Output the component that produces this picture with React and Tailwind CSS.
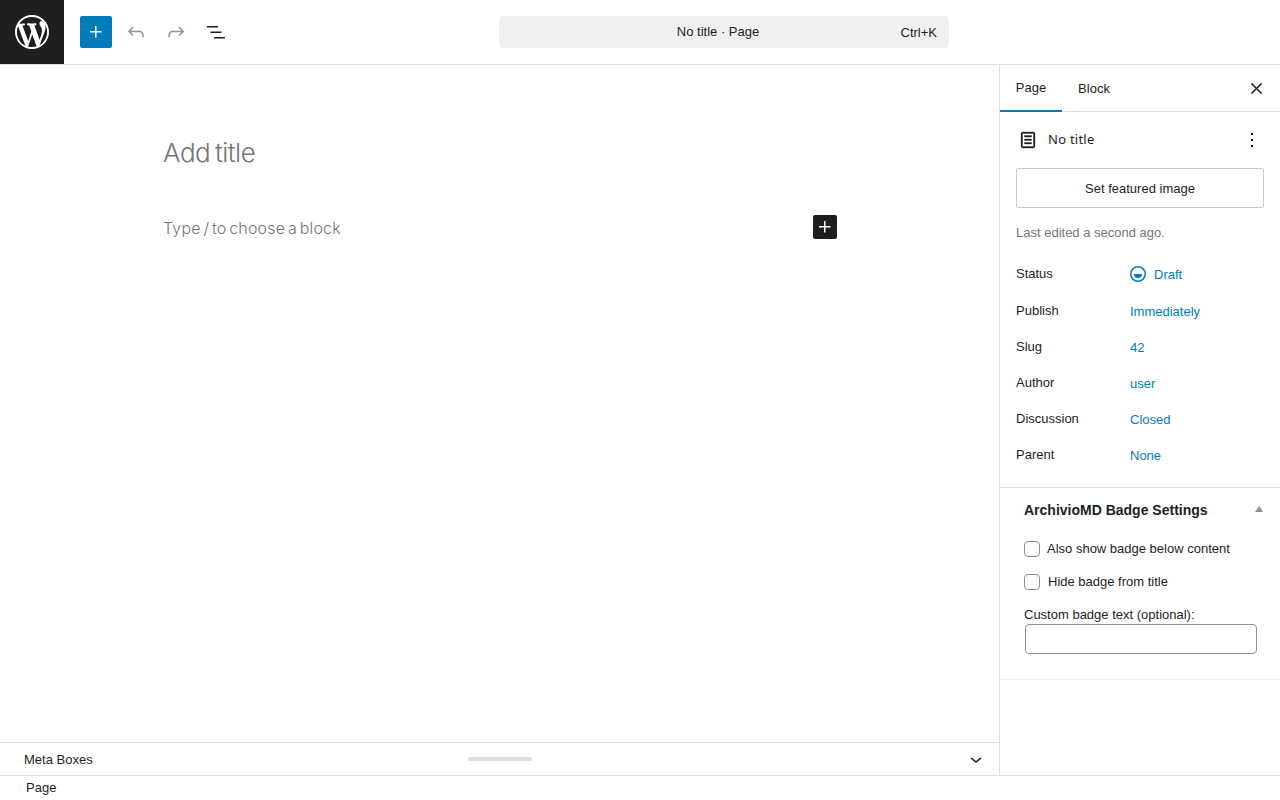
const Plus = ({ className }) => (
  <svg viewBox="0 0 24 24" className={className} fill="currentColor">
    <path d="M11 12.5V17.5H12.5V12.5H17.5V11H12.5V6H11V11H6V12.5H11Z" />
  </svg>
);

const rows = [
  ["Publish", "Immediately"],
  ["Slug", "42"],
  ["Author", "user"],
  ["Discussion", "Closed"],
  ["Parent", "None"],
];

function TopBar() {
  return (
    <header className="h-[65px] shrink-0 flex border-b border-[#e0e0e0] bg-white">
      <div className="w-16 h-16 bg-[#1e1e1e] flex items-center justify-center text-white">
        <svg viewBox="0 0 20 20" className="w-[34px] h-[34px]" fill="currentColor">
          <path d="M20 10c0-5.51-4.49-10-10-10C4.48 0 0 4.49 0 10c0 5.52 4.48 10 10 10 5.51 0 10-4.48 10-10zM7.78 15.37L4.37 6.22c.55-.02 1.17-.08 1.17-.08.5-.06.44-1.13-.06-1.11 0 0-1.45.11-2.37.11-.18 0-.37 0-.58-.01C4.12 2.69 6.87 1.11 10 1.11c2.33 0 4.45.87 6.05 2.34-.68-.11-1.65.39-1.65 1.58 0 .74.45 1.36.9 2.1.35.61.55 1.36.55 2.46 0 1.49-1.4 5-1.4 5l-3.03-8.37c.54-.02.82-.17.82-.17.5-.05.44-1.25-.06-1.22 0 0-1.44.12-2.38.12-.87 0-2.33-.12-2.33-.12-.5-.03-.56 1.2-.06 1.22l.92.08 1.26 3.41zM17.41 10c.24-.64.74-1.87.43-4.25.7 1.29 1.05 2.71 1.05 4.25 0 3.29-1.73 6.24-4.4 7.78.97-2.59 1.94-5.2 2.92-7.78zM6.1 18.09C3.12 16.65 1.11 13.53 1.11 10c0-1.3.23-2.48.72-3.59C3.25 10.3 4.67 14.2 6.1 18.09zm4.03-6.63l2.58 6.98c-.86.29-1.76.45-2.71.45-.79 0-1.57-.11-2.29-.33.81-2.38 1.62-4.74 2.42-7.1z" />
        </svg>
      </div>
      <div className="flex items-center gap-2 pl-4 h-16 w-[435px] shrink-0">
        <button className="w-8 h-8 rounded-[2px] bg-[#007cba] text-white flex items-center justify-center">
          <Plus className="w-6 h-6" />
        </button>
        <button className="w-8 h-8 flex items-center justify-center text-[#949494]">
          <svg viewBox="0 0 24 24" className="w-6 h-6" fill="currentColor">
            <path d="M18.3 11.7c-.6-.6-1.4-.9-2.3-.9H6.7l2.9-3.3-1.1-1-4.5 5L8.5 16l1-1-2.7-2.7H16c.5 0 .9.2 1.3.5 1 1 1 3.4 1 4.5v.3h1.5v-.2c0-1.5 0-4.3-1.5-5.7z" />
          </svg>
        </button>
        <button className="w-8 h-8 flex items-center justify-center text-[#949494]">
          <svg viewBox="0 0 24 24" className="w-6 h-6" fill="currentColor">
            <path d="M15.6 6.5l-1.1 1 2.9 3.3H8c-.9 0-1.7.3-2.3.9-1.4 1.5-1.4 4.2-1.4 5.6v.2h1.5v-.3c0-1.1 0-3.5 1-4.5.3-.3.7-.5 1.3-.5h9.2L14.5 15l1.1 1.1 4.6-4.6-4.6-5z" />
          </svg>
        </button>
        <button className="w-8 h-8 flex items-center justify-center text-[#1e1e1e]">
          <svg viewBox="0 0 24 24" className="w-6 h-6" fill="currentColor">
            <path d="M3 6h11v1.5H3V6Zm3.5 5.5h11V13h-11v-1.5ZM21 17H10v1.5h11V17Z" />
          </svg>
        </button>
      </div>
      <div className="h-16 flex items-center">
        <div className="w-[450px] h-8 rounded-[4px] bg-[#f0f0f0] grid grid-cols-[1fr_auto_1fr] items-center px-3 text-[13px] text-[#1e1e1e]">
          <span />
          <span className="pr-[12px]">No title · Page</span>
          <span className="text-right pt-[1px]">Ctrl+K</span>
        </div>
      </div>
    </header>
  );
}

function Editor() {
  return (
    <main className="flex-1 flex flex-col min-w-0">
      <div className="flex-1 min-h-0">
        <div className="w-[674px] ml-[163px] font-['Inter',sans-serif] text-[#757575]">
          <h1 className="mt-[70px] h-[36px] leading-[36px] text-[26px] font-light tracking-[-0.5px] [word-spacing:-2px]">Add title</h1>
          <div className="mt-[44px] h-[24px] flex items-center justify-between text-[16px] font-light leading-[24px]">
            <span className="pt-[1px] tracking-[0.2px] [word-spacing:-2px]">Type / to choose a block</span>
            <button className="w-6 h-6 rounded-[2px] bg-[#1e1e1e] text-white flex items-center justify-center">
              <Plus className="w-6 h-6" />
            </button>
          </div>
        </div>
      </div>
      <div className="h-[33px] shrink-0 border-t border-[#e0e0e0] grid grid-cols-[1fr_64px_1fr] items-center px-6 text-[13px] text-[#1e1e1e]">
        <span className="pt-[1px]">Meta Boxes</span>
        <span className="h-1 rounded-full bg-[#ddd]" />
        <span className="flex justify-end -mr-[13px]">
          <svg viewBox="0 0 24 24" className="w-6 h-6" fill="currentColor">
            <path d="M17.5 11.6L12 16l-5.5-4.4.9-1.2L12 14l4.5-3.6 1 1.2z" />
          </svg>
        </span>
      </div>
    </main>
  );
}

function Sidebar() {
  return (
    <aside className="w-[281px] shrink-0 border-l border-[#e0e0e0] text-[13px] text-[#1e1e1e] flex flex-col">
      <div className="h-[47px] shrink-0 border-b border-[#e0e0e0] flex items-center">
        <button className="h-[47px] w-[62px] -mb-px border-b-2 border-[#007cba] text-[13px] pt-[1px]">Page</button>
        <button className="h-[47px] w-[64px] text-[13px] pt-[1px]">Block</button>
        <button className="ml-auto mr-2 w-8 h-8 flex items-center justify-center">
          <svg viewBox="0 0 24 24" className="w-[17px] h-[17px]" fill="currentColor" stroke="currentColor" strokeWidth="0.8">
            <path d="m13.06 12 6.47-6.47-1.06-1.06L12 10.94 5.53 4.47 4.47 5.53 10.94 12l-6.47 6.47 1.06 1.06L12 13.06l6.47 6.47 1.06-1.06L13.06 12Z" />
          </svg>
        </button>
      </div>

      <section className="px-4 pt-4 pb-[5px] border-b border-[#e0e0e0]">
        <div className="flex items-center h-6">
          <svg viewBox="0 0 24 24" className="w-6 h-6 shrink-0" fill="currentColor" stroke="currentColor" strokeWidth="0.35">
            <path d="M15.5 7.5h-7V9h7V7.5Zm-7 3.5h7v1.5h-7V11Zm7 3.5h-7V16h7v-1.5Z" />
            <path fillRule="evenodd" d="M17 4H7a2 2 0 0 0-2 2v12a2 2 0 0 0 2 2h10a2 2 0 0 0 2-2V6a2 2 0 0 0-2-2Zm0 1.5H7a.5.5 0 0 0-.5.5v12a.5.5 0 0 0 .5.5h10a.5.5 0 0 0 .5-.5V6a.5.5 0 0 0-.5-.5Z" />
          </svg>
          <span className="ml-2 font-['Noto_Sans',sans-serif] tracking-[0.25px]">No title</span>
          <svg viewBox="0 0 24 24" className="w-6 h-6 ml-auto" fill="currentColor">
            <path d="M13 19h-2v-2h2v2zm0-6h-2v-2h2v2zm0-6h-2V5h2v2z" />
          </svg>
        </div>
        <button className="mt-[16px] w-[248px] h-10 border border-[#c8c8c8] rounded-[2px] text-[13px] pt-[1px]">Set featured image</button>
        <p className="mt-[16px] leading-[18px] text-[#757575]">Last edited a second ago.</p>
        <div className="mt-[23px] flex h-[37px] items-start">
          <span className="w-[114px] leading-[18px]">Status</span>
          <span className="flex items-center h-5 text-[#007cba] gap-2">
            <svg viewBox="0 0 16 16" className="w-4 h-4 shrink-0 -mt-[2px]">
              <circle cx="8" cy="8" r="7.25" fill="none" stroke="currentColor" strokeWidth="1.5" />
              <path d="M4 8h8a4 4 0 0 1-8 0Z" fill="currentColor" />
            </svg>
            Draft
          </span>
        </div>
        {rows.map(([label, value]) => (
          <div key={label} className="flex h-[36px] items-start">
            <span className="w-[114px] leading-[18px]">{label}</span>
            <span className="leading-[18px] pt-[1px] text-[#007cba]">{value}</span>
          </div>
        ))}
      </section>

      <section className="px-6 pt-[12px] pb-[25px] border-b border-[#f0f0f0]">
        <div className="flex items-center h-[20px] justify-between">
          <h2 className="text-[14px] font-bold leading-[20px]">ArchivioMD Badge Settings</h2>
          <span className="w-0 h-0 -mr-[7px] mb-[2px] border-x-[4px] border-x-transparent border-b-[6px] border-b-[#8c8f94]" />
        </div>
        <label className="mt-[20px] flex items-center h-[18px]">
          <span className="w-4 h-4 border border-[#8c8f94] rounded-[4px] bg-white shrink-0" />
          <span className="ml-[7px]">Also show badge below content</span>
        </label>
        <label className="mt-[15px] flex items-center h-[18px]">
          <span className="w-4 h-4 border border-[#8c8f94] rounded-[4px] bg-white shrink-0" />
          <span className="ml-[8px]">Hide badge from title</span>
        </label>
        <div className="mt-[15px] leading-[18px]">Custom badge text (optional):</div>
        <div className="ml-px w-[232px] h-[30px] border border-[#8c8f94] rounded-[4px] bg-white" />
      </section>
    </aside>
  );
}

export default function App() {
  return (
    <div className="h-screen flex flex-col overflow-hidden bg-white font-['Liberation_Sans',Arial,sans-serif]">
      <TopBar />
      <div className="flex-1 flex min-h-0">
        <Editor />
        <Sidebar />
      </div>
      <footer className="h-[25px] shrink-0 border-t border-[#e0e0e0] pl-[26px] text-[13px] leading-[23px] text-[#1e1e1e]">
        Page
      </footer>
    </div>
  );
}
